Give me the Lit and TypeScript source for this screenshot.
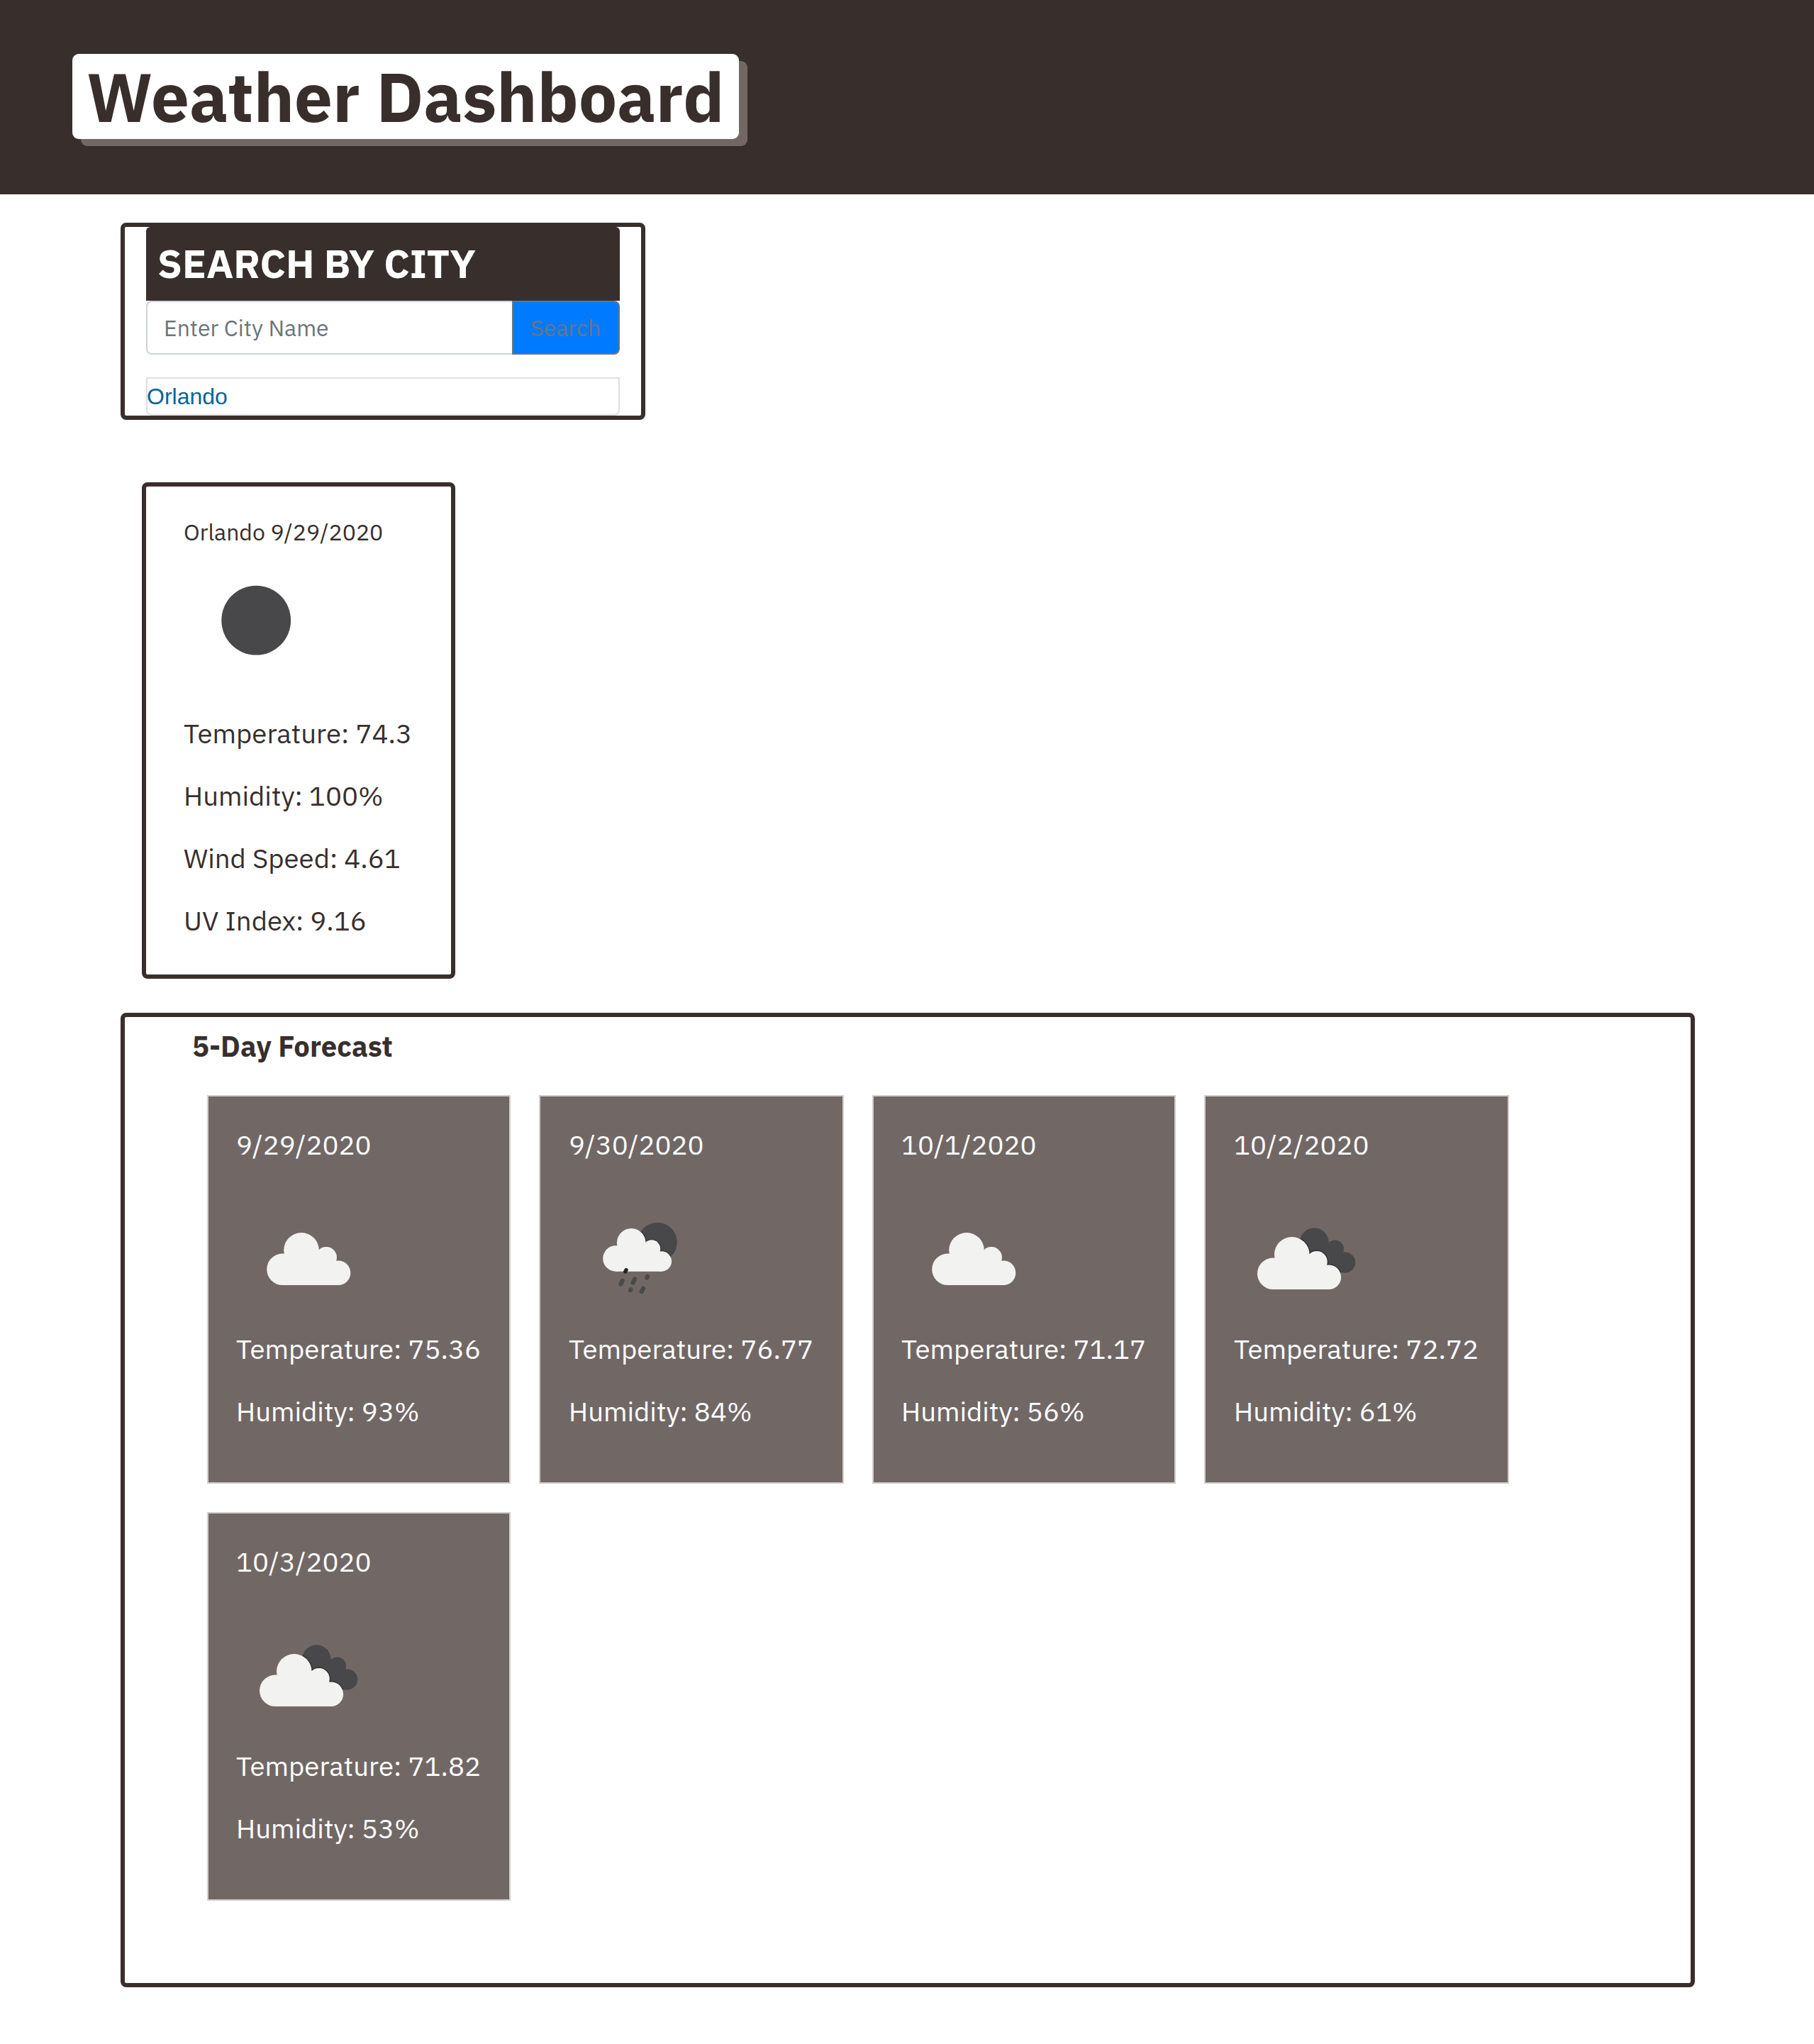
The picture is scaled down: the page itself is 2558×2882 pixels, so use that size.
import { LitElement, html, svg, css } from "lit";
import { customElement, property } from "lit/decorators.js";

type Icon = "clear" | "cloudy" | "rain" | "broken";

interface Day {
  date: string;
  icon: Icon;
  temperature: string;
  humidity: string;
}

const FORECAST: Day[] = [
  { date: "9/29/2020", icon: "cloudy", temperature: "75.36", humidity: "93%" },
  { date: "9/30/2020", icon: "rain", temperature: "76.77", humidity: "84%" },
  { date: "10/1/2020", icon: "cloudy", temperature: "71.17", humidity: "56%" },
  { date: "10/2/2020", icon: "broken", temperature: "72.72", humidity: "61%" },
  { date: "10/3/2020", icon: "broken", temperature: "71.82", humidity: "53%" },
];

// Front cloud, used at different offsets and scales by several icons.
const cloud = () => svg`
  <circle cx="64.5" cy="114.8" r="22.3"/>
  <circle cx="91" cy="87.8" r="24.8"/>
  <circle cx="126" cy="98" r="15"/>
  <circle cx="143" cy="119.8" r="17.3"/>
  <path d="M64.5 137.1V114L91 88L126 98L143 119.8V137.1Z"/>`;

const backCloud = () => svg`
  <circle cx="112.3" cy="76.7" r="20.4"/>
  <circle cx="141.5" cy="86" r="12.6"/>
  <circle cx="155.8" cy="104.9" r="14.5"/>
  <path d="M100 76L112 76L141 86L156 105V119.4L130 119Z"/>`;

@customElement("weather-icon")
export class WeatherIcon extends LitElement {
  static styles = css`
    :host {
      display: block;
      width: 200px;
      height: 197px;
    }
    svg {
      display: block;
      overflow: visible;
    }
    .dark {
      fill: #48484a;
    }
    .light {
      fill: #f2f2f1;
    }
    .edge {
      fill: #2b2b2c;
      stroke: #2b2b2c;
      stroke-width: 2.4;
    }
    .drop {
      stroke: #4a4a4c;
      stroke-width: 6.2;
      stroke-linecap: round;
    }
    .drop-near {
      stroke: #242425;
      stroke-width: 5.4;
    }
  `;

  @property() kind: Icon = "clear";

  private shape() {
    switch (this.kind) {
      case "clear":
        return svg`<circle class="dark" cx="101.2" cy="99.7" r="48.9"/>`;
      case "cloudy":
        return svg`<g class="light">${cloud()}</g>`;
      case "broken":
        return svg`
          <clipPath id="back">${backCloud()}</clipPath>
          <g class="dark">${backCloud()}</g>
          <g clip-path="url(#back)"><g class="edge" transform="translate(-10.2 6)">${cloud()}</g></g>
          <g class="light" transform="translate(-10.2 6)">${cloud()}</g>`;
      case "rain":
        return svg`
          <clipPath id="moon"><circle cx="124" cy="76.5" r="27.8"/></clipPath>
          <circle class="dark" cx="124" cy="76.5" r="27.8"/>
          <g clip-path="url(#moon)"><g class="edge" transform="translate(12.6 5.3) scale(.82)">${cloud()}</g></g>
          <g class="light" transform="translate(12.6 5.3) scale(.82)">${cloud()}</g>
          <path class="drop drop-near" d="M80 115.6L78.8 118"/>
          <path class="drop" d="M74.7 130.6L72.4 135.6M92.2 128.4L89.6 133.6M110.1 124.8L109.3 126.6M86.3 143.2L85.9 144.2M104.2 141.6L101.8 146.2"/>`;
    }
  }

  render() {
    return html`<svg width="200" height="197" viewBox="0 0 200 197">${this.shape()}</svg>`;
  }
}

@customElement("app-root")
export class AppRoot extends LitElement {
  static styles = css`
    :host {
      display: block;
      min-height: 2882px;
      background: #fff;
      color: #382f2d;
      font-family: "IBM Plex Sans", Inter, "Liberation Sans", sans-serif;
      font-size: 38.4px;
      line-height: 60px;
      white-space: nowrap;
    }
    * {
      box-sizing: border-box;
      margin: 0;
    }
    .header {
      height: 274px;
      padding: 76px 102px 0;
      background: #382f2d;
    }
    .title {
      width: 940px;
      height: 120px;
      padding-left: 20px;
      border-radius: 9px;
      background: #fff;
      box-shadow: 12px 10px 0 #716866;
      font-size: 96px;
      line-height: 120px;
      font-weight: 700;
    }
    .search {
      width: 740px;
      height: 278px;
      margin: 40px 0 0 170px;
      padding: 0 30px;
      border: 6px solid #382f2d;
      border-radius: 8px;
    }
    .search-title {
      height: 104px;
      padding-left: 16px;
      border-radius: 6px 6px 0 0;
      background: #382f2d;
      color: #fff;
      font-size: 56px;
      line-height: 102px;
      font-weight: 700;
    }
    .search-row {
      display: flex;
      height: 76px;
    }
    .field {
      flex: 1;
      min-width: 0;
      padding: 0 22px 0 23px;
      border: 2px solid #ced4da;
      border-right: 0;
      border-radius: 8px 0 0 8px;
      outline: 0;
      background: #fff;
      font: inherit;
      font-size: 32px;
    }
    .field::placeholder {
      color: #6c757d;
      opacity: 1;
    }
    .button {
      width: 152px;
      padding: 0 0 0 24px;
      border: 2px solid #6c757d;
      border-radius: 0 8px 8px 0;
      background: #007bff;
      color: #6c757d;
      font: inherit;
      font-size: 32px;
      text-align: left;
    }
    .history {
      height: 54px;
      margin-top: 32px;
      padding: 1px 0 0;
      border: 2px solid #dfdfdf;
      border-radius: 0 0 8px 8px;
      color: #006699;
      font-family: "Liberation Sans", Arial, sans-serif;
      font-size: 32px;
      line-height: 48px;
      text-indent: -1px;
      list-style: none;
    }
    .current {
      display: flex;
      flex-direction: column;
      width: 442px;
      height: 700px;
      margin: 88px 0 0 200px;
      padding: 40px 0 0 53px;
      border: 6px solid #382f2d;
      border-radius: 8px;
    }
    .place {
      font-size: 32px;
      line-height: 48px;
    }
    .current weather-icon {
      margin: 1px 0 32px 1px;
    }
    .rows {
      display: flex;
      flex-direction: column;
      gap: 28px;
    }
    .forecast {
      width: 2220px;
      height: 1374px;
      margin: 48px 0 0 170px;
      padding: 11px 0 0;
      border: 6px solid #382f2d;
      border-radius: 8px;
    }
    .forecast-title {
      padding-left: 95px;
      font-size: 40px;
      font-weight: 700;
    }
    .cards {
      display: grid;
      grid-template-columns: 428px 430px 428px 430px;
      gap: 40px;
      margin: 39px 0 0 116px;
    }
    .card {
      height: 548px;
      padding: 38px 0 0 39px;
      border: 2px solid #d0cecd;
      background: #716866;
      color: #fff;
    }
    .card:nth-child(even) {
      padding-left: 40px;
    }
    .card weather-icon {
      margin: 31px 0 0 1px;
    }
  `;

  private row(label: string, value: string) {
    return html`<p>${label}: ${value}</p>`;
  }

  render() {
    return html`
      <header class="header"><h1 class="title">Weather Dashboard</h1></header>
      <section class="search">
        <h2 class="search-title">SEARCH BY CITY</h2>
        <div class="search-row">
          <input class="field" placeholder="Enter City Name" />
          <button class="button">Search</button>
        </div>
        <ul class="history"><li>Orlando</li></ul>
      </section>
      <section class="current">
        <p class="place">Orlando 9/29/2020</p>
        <weather-icon kind="clear"></weather-icon>
        <div class="rows">
          ${this.row("Temperature", "74.3")}
          ${this.row("Humidity", "100%")}
          ${this.row("Wind Speed", "4.61")}
          ${this.row("UV Index", "9.16")}
        </div>
      </section>
      <section class="forecast">
        <h3 class="forecast-title">5-Day Forecast</h3>
        <div class="cards">
          ${FORECAST.map(
            (day) => html`<article class="card">
              <p>${day.date}</p>
              <weather-icon kind=${day.icon}></weather-icon>
              <div class="rows">
                ${this.row("Temperature", day.temperature)}
                ${this.row("Humidity", day.humidity)}
              </div>
            </article>`
          )}
        </div>
      </section>
    `;
  }
}
